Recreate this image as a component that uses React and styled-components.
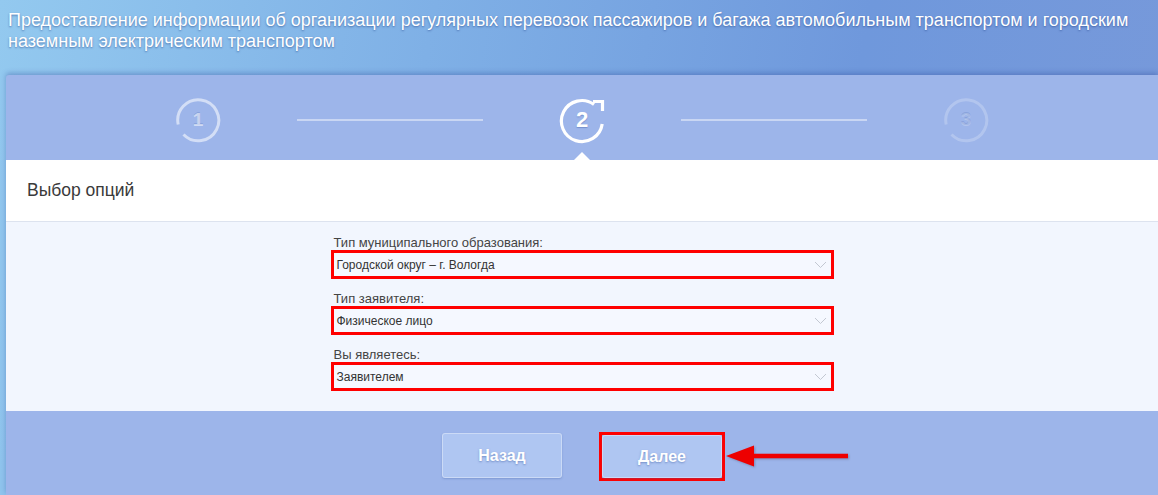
import React from "react";
import styled, { createGlobalStyle } from "styled-components";

const Global = createGlobalStyle`
  html, body { margin: 0; padding: 0; }
  body {
    font-family: "Liberation Sans", Arial, sans-serif;
    background: #86b3e8;
    overflow: hidden;
  }
`;

const Page = styled.div`
  width: 1158px;
  height: 495px;
  overflow: hidden;
  display: flex;
  flex-direction: column;
  background: linear-gradient(100deg, #93c9ef 0%, #7fb0e6 35%, #6f98dc 70%, #7899da 100%);
`;

const Title = styled.h1`
  margin: 0;
  height: 75px;
  box-sizing: border-box;
  padding: 10px 14px 0 8px;
  font-size: 18px;
  line-height: 21px;
  font-weight: normal;
  color: #ffffff;
  text-shadow: 0 1px 2px rgba(30, 60, 130, 0.55);
`;

const Card = styled.div`
  margin-left: 6px;
  flex: 1;
  display: flex;
  flex-direction: column;
  background: #9db5ea;
  border-top-left-radius: 3px;
  box-shadow: 0 -2px 5px rgba(40, 70, 150, 0.35);
`;

const Steps = styled.div`
  position: relative;
  height: 85px;
  display: flex;
  align-items: center;
  justify-content: center;
  gap: 77px;
  &::after {
    content: "";
    position: absolute;
    left: 568px;
    bottom: 0;
    border-left: 8px solid transparent;
    border-right: 8px solid transparent;
    border-bottom: 8px solid #ffffff;
  }
`;

const StepIcon = styled.div`
  position: relative;
  width: 48px;
  height: 48px;
  margin: 4px -2px 0;
  display: flex;
  align-items: center;
  justify-content: center;
  svg { position: absolute; left: 0; top: 0; }
`;

const StepNum = styled.span`
  position: relative;
  font-size: ${(p) => (p.$active ? "22px" : "19px")};
  font-weight: bold;
  color: ${(p) => p.$color};
  text-shadow: ${(p) => (p.$active ? "0 1px 1px rgba(60,90,160,0.4)" : "0 -1px 0 rgba(80,110,180,0.25)")};
`;

const StepLine = styled.div`
  width: 186px;
  height: 2px;
  margin-top: 4px;
  background: rgba(255, 255, 255, 0.45);
`;

const Header = styled.div`
  height: 62px;
  box-sizing: border-box;
  background: #ffffff;
  border-bottom: 1px solid #dde3ef;
  display: flex;
  align-items: center;
  padding-left: 21px;
  font-size: 17.5px;
  color: #3a3a3a;
`;

const Form = styled.div`
  background: #f2f6fe;
  padding: 13px 0 20px;
  display: flex;
  justify-content: center;
`;

const Fields = styled.div`
  width: 503px;
  display: flex;
  flex-direction: column;
  gap: 12px;
`;

const Field = styled.div`
  display: flex;
  flex-direction: column;
`;

const Label = styled.label`
  font-size: 13px;
  line-height: 15px;
  color: #444;
  padding-left: 3px;
`;

const Select = styled.div`
  height: 29px;
  box-sizing: border-box;
  border: 3px solid #ff0000;
  background: #f5f8ff;
  display: flex;
  align-items: center;
  justify-content: space-between;
  padding: 0 4px 0 3px;
  font-size: 12px;
  color: #333;
`;

const Chevron = () => (
  <svg width="13" height="8" viewBox="0 0 13 8">
    <path d="M1 1 L6.5 6.5 L12 1" fill="none" stroke="#c3c8d2" strokeWidth="1" />
  </svg>
);

const Footer = styled.div`
  flex: 1;
  display: flex;
  justify-content: center;
  align-items: flex-start;
  gap: 40px;
  padding-top: 22px;
`;

const Button = styled.button`
  display: block;
  width: 120px;
  height: ${(p) => (p.$short ? "43px" : "45px")};
  border: 1px solid rgba(255, 255, 255, 0.35);
  border-radius: 3px;
  background: #afc6f2;
  box-shadow: 0 1px 2px rgba(70, 100, 170, 0.35);
  color: #ffffff;
  font-family: "Liberation Sans", Arial, sans-serif;
  font-size: 16px;
  font-weight: bold;
  text-shadow: 0 1px 2px rgba(60, 90, 160, 0.5);
  cursor: pointer;
`;

const Marker = styled.div`
  position: relative;
  border: 3px solid #ff0000;
  margin: -1px -3px 0;
`;

const Arrow = styled.svg`
  position: absolute;
  left: 124px;
  top: 9px;
  filter: drop-shadow(1px 1px 1px rgba(60, 60, 90, 0.35));
`;

function RingIcon({ color }) {
  return (
    <svg width="48" height="48" viewBox="0 0 48 48">
      <path d="M4.2 28.5 A20.5 20.5 0 1 1 9.5 38.5" fill="none" stroke={color} strokeWidth="3" />
    </svg>
  );
}

function RefreshIcon() {
  return (
    <svg width="48" height="48" viewBox="0 0 48 48">
      <path d="M36 8.5 A20.5 20.5 0 1 0 44.2 28" fill="none" stroke="#ffffff" strokeWidth="3.2" />
      <path d="M35 5.5 L44.5 5.5 L44.5 15" fill="none" stroke="#ffffff" strokeWidth="3.2" />
    </svg>
  );
}

export default function App() {
  const done = "rgba(255,255,255,0.55)";
  const todo = "rgba(255,255,255,0.22)";
  return (
    <>
      <Global />
      <Page>
        <Title>
          Предоставление информации об организации регулярных перевозок пассажиров и багажа автомобильным транспортом и городским наземным электрическим транспортом
        </Title>
        <Card>
          <Steps>
            <StepIcon>
              <RingIcon color={done} />
              <StepNum $color={done}>1</StepNum>
            </StepIcon>
            <StepLine />
            <StepIcon>
              <RefreshIcon />
              <StepNum $active $color="#fff">2</StepNum>
            </StepIcon>
            <StepLine />
            <StepIcon>
              <RingIcon color={todo} />
              <StepNum $color={todo}>3</StepNum>
            </StepIcon>
          </Steps>
          <Header>Выбор опций</Header>
          <Form>
            <Fields>
              <Field>
                <Label>Тип муниципального образования:</Label>
                <Select>
                  <span>Городской округ – г. Вологда</span>
                  <Chevron />
                </Select>
              </Field>
              <Field>
                <Label>Тип заявителя:</Label>
                <Select>
                  <span>Физическое лицо</span>
                  <Chevron />
                </Select>
              </Field>
              <Field>
                <Label>Вы являетесь:</Label>
                <Select>
                  <span>Заявителем</span>
                  <Chevron />
                </Select>
              </Field>
            </Fields>
          </Form>
          <Footer>
            <Button>Назад</Button>
            <Marker>
              <Button $short>Далее</Button>
              <Arrow width="126" height="24" viewBox="0 0 126 24">
                <path d="M0 12 L28 1.5 L28 9.8 L122 9.8 L122 14.2 L28 14.2 L28 22.5 Z" fill="#ee0000" />
              </Arrow>
            </Marker>
          </Footer>
        </Card>
      </Page>
    </>
  );
}
